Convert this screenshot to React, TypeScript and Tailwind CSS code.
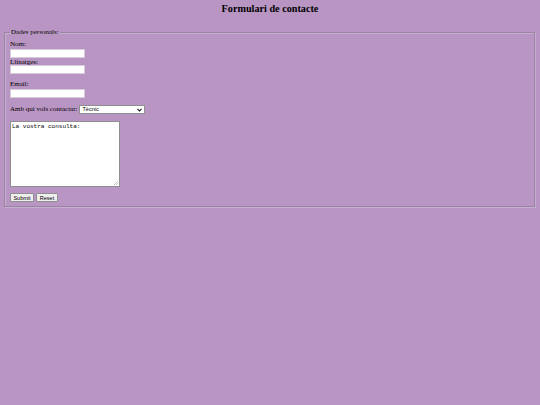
import React from "react";

export default function App() {
  const serif = { fontFamily: '"Liberation Serif", "Times New Roman", serif' };
  return (
    <div className="w-[540px] h-[405px] bg-[#b995c3] text-black overflow-hidden" style={serif}>
      <h1 className="text-center font-bold text-[10.2px] leading-[12px] pt-[3px] h-[28px] m-0 text-black">
        Formulari de contacte
      </h1>
      <fieldset className="ml-[4px] mr-[5px] border border-[#9a84a2] px-[5px] pt-0 pb-[4px] text-[7px] leading-[9px]" style={{ boxShadow: "inset 1px 1px 0 #c6aed0, 1px 1px 0 #c6aed0" }}>
        <legend className="px-[1px] text-[7px] leading-[9px]">Dades personals:</legend>
        <div className="flex flex-col">
          <label className="h-[9px] mt-[3px]">Nom:</label>
          <input type="text" className="w-[75px] h-[9px] bg-white border border-[#d5cbd9] outline-none" />
          <label className="h-[7px] leading-[8px]">Llinatges:</label>
          <input type="text" className="w-[75px] h-[9px] bg-white border border-[#d5cbd9] outline-none" />
          <label className="h-[9px] mt-[6px]">Email:</label>
          <input type="text" className="w-[75px] h-[9px] bg-white border border-[#d5cbd9] outline-none" />
          <div className="flex items-center mt-[7px] h-[9px]">
            <span>Amb qui vols contactar:</span>
            <div className="ml-[2px] w-[66px] h-[9px] bg-white border border-[#8f8f8f] flex items-center justify-between pl-[2px] pr-[2px]" style={{ fontFamily: '"Liberation Sans", Arial, sans-serif' }}>
              <span className="text-[5.5px] leading-[7px]">Tècnic</span>
              <svg width="5" height="4" viewBox="0 0 5 4"><path d="M0.5 0.8 L2.5 3 L4.5 0.8" stroke="#111" strokeWidth="1.1" fill="none" /></svg>
            </div>
          </div>
          <div className="relative mt-[7px] w-[110px] h-[66px] bg-white border border-[#8f8f8f]">
            <div className="px-[1px] pt-[1px] text-[6px] leading-[7px]" style={{ fontFamily: '"Liberation Mono", "Courier New", monospace' }}>La vostra consulta:</div>
            <svg className="absolute right-[1px] bottom-[1px]" width="4" height="4" viewBox="0 0 4 4"><path d="M4 0 L0 4 M4 2 L2 4" stroke="#999" strokeWidth="0.6" /></svg>
          </div>
          <div className="flex gap-[2px] mt-[6px]" style={{ fontFamily: '"Liberation Sans", Arial, sans-serif' }}>
            <button className="w-[24px] h-[9px] bg-[#efefef] border border-[#8f8f8f] rounded-[1px] text-[5.5px] leading-[6px] flex items-center justify-center">Submit</button>
            <button className="w-[22px] h-[9px] bg-[#efefef] border border-[#8f8f8f] rounded-[1px] text-[5.5px] leading-[6px] flex items-center justify-center">Reset</button>
          </div>
        </div>
      </fieldset>
    </div>
  );
}
